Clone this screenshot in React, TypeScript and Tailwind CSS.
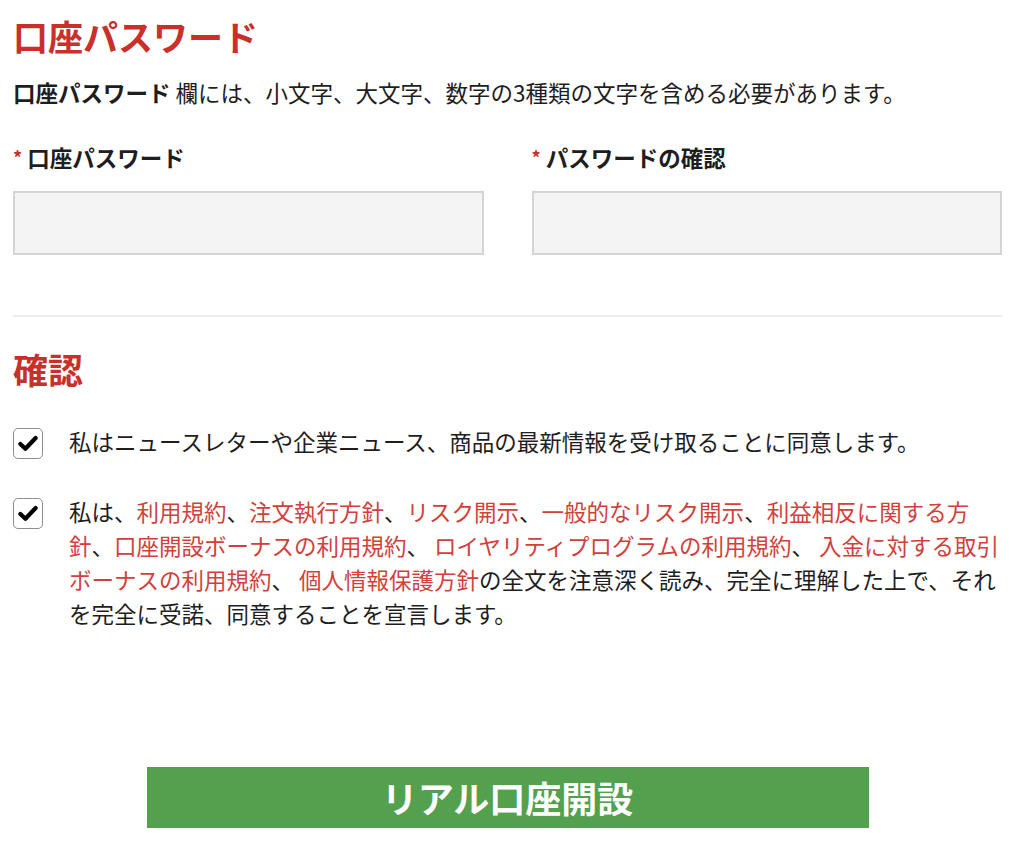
import { useState } from 'react'

const red = 'text-[#c9302c]'
const link = 'text-[#d2403c]'

function Check({ checked, onClick }: { checked: boolean; onClick: () => void }) {
  return (
    <button
      type="button"
      onClick={onClick}
      className="mt-[4px] w-[30px] h-[31px] shrink-0 rounded-[5px] border-[1.5px] border-[#8e8e8e] bg-white flex items-center justify-center"
    >
      {checked ? (
        <svg width="20" height="17" viewBox="0 0 20 17">
          <path d="M2.4 9 L7.4 13.8 L17.6 3" fill="none" stroke="#000" strokeWidth="4.2" strokeLinecap="round" strokeLinejoin="round" />
        </svg>
      ) : null}
    </button>
  )
}

export default function App() {
  const [news, setNews] = useState(true)
  const [terms, setTerms] = useState(true)

  return (
    <div
      className="w-[1024px] bg-white pl-[13px] pr-[22px] pt-[14px] pb-[34px] text-[#1e1e1e]"
      style={{ fontFamily: '"Noto Sans CJK JP", "Noto Sans", sans-serif' }}
    >
      <h2 className={`text-[35px] leading-[44px] font-bold ${red}`}>口座パスワード</h2>
      <p className="mt-[17px] text-[22.5px] leading-[34px]">
        <span className="font-bold">口座パスワード</span> 欄には、小文字、大文字、数字の3種類の文字を含める必要があります。
      </p>

      <div className="mt-[31px] grid grid-cols-2 gap-x-[48px]">
        <div>
          <label className="block text-[22.5px] leading-[34px] font-bold">
            <span className={`${red} text-[18px] align-top`}>*</span> 口座パスワード
          </label>
          <input type="password" className="mt-[17px] block w-full h-[64px] bg-[#f4f4f4] border-2 border-[#d4d4d4] outline-none px-3" />
        </div>
        <div>
          <label className="block text-[22.5px] leading-[34px] font-bold">
            <span className={`${red} text-[18px] align-top`}>*</span> パスワードの確認
          </label>
          <input type="password" className="mt-[17px] block w-full h-[64px] bg-[#f4f4f4] border-2 border-[#d4d4d4] outline-none px-3" />
        </div>
      </div>

      <div className="mt-[60px] h-[2px] bg-[#ececec]" />

      <h2 className={`mt-[30px] text-[35px] leading-[44px] font-bold ${red}`}>確認</h2>

      <div className="mt-[33px] flex items-start gap-[26px]">
        <Check checked={news} onClick={() => setNews((v) => !v)} />
        <p className="text-[22.5px] leading-[34px]">
          私はニュースレターや企業ニュース、商品の最新情報を受け取ることに同意します。
        </p>
      </div>

      <div className="mt-[35px] flex items-start gap-[26px]">
        <Check checked={terms} onClick={() => setTerms((v) => !v)} />
        <p className="text-[22.5px] leading-[34px]">
          私は、<a className={link}>利用規約</a>、<a className={link}>注文執行方針</a>、
          <a className={link}>リスク開示</a>、<a className={link}>一般的なリスク開示</a>、
          <a className={link}>利益相反に関する方針</a>、<a className={link}>口座開設ボーナスの利用規約</a>、{' '}
          <a className={link}>ロイヤリティプログラムの利用規約</a>、{' '}
          <a className={link}>入金に対する取引ボーナスの利用規約</a>、{' '}
          <a className={link}>個人情報保護方針</a>の全文を注意深く読み、完全に理解した上で、それを完全に受諾、同意することを宣言します。
        </p>
      </div>

      <button
        type="button"
        className="mt-[137px] mx-auto block w-[722px] h-[61px] bg-[#53a04f] text-white text-[36px] font-bold leading-[61px]"
      >
        リアル口座開設
      </button>
    </div>
  )
}
